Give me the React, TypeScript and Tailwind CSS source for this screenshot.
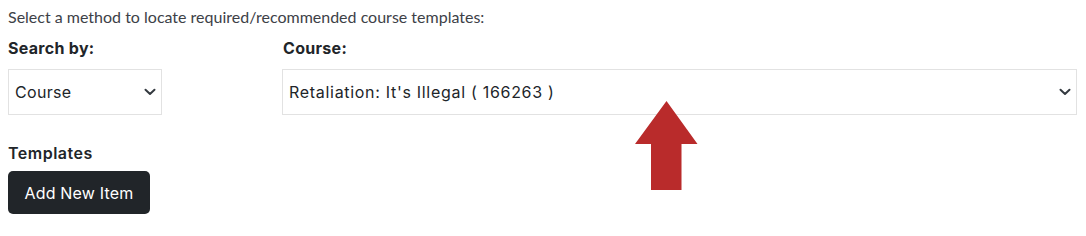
import React from 'react';

const Chevron: React.FC = () => (
  <svg width="12" height="8" viewBox="0 0 12 8" className="pointer-events-none absolute right-[6px] top-1/2 -translate-y-1/2">
    <path d="M1.5 1.8 L6 6 L10.5 1.8" fill="none" stroke="#343a40" strokeWidth="2" strokeLinecap="round" strokeLinejoin="round" />
  </svg>
);

const App: React.FC = () => {
  return (
    <div className="relative h-[236px] w-[1086px] bg-white px-2 text-[16px] text-[#212529] [font-family:Inter,'Noto_Sans',sans-serif]">
      <p className="pt-[5px] leading-6 text-[#3d4147] [font-family:Lato,Inter,sans-serif]">
        Select a method to locate required/recommended course templates:
      </p>
      <div className="mt-[7px] flex gap-[120px]">
        <div className="w-[154px]">
          <label className="block font-bold leading-6 tracking-[0.3px]">Search by:</label>
          <div className="relative mt-[9px]">
            <select className="h-[46px] w-full appearance-none border border-[#e2e2e2] bg-white pl-[6px] text-[16px] tracking-[0.3px] text-[#212529] outline-none">
              <option>Course</option>
            </select>
            <Chevron />
          </div>
        </div>
        <div className="w-[795px]">
          <label className="block pl-px font-bold leading-6 tracking-[0.3px]">Course:</label>
          <div className="relative mt-[9px]">
            <select className="h-[46px] w-full appearance-none border border-[#e2e2e2] bg-white pl-[6px] text-[16px] tracking-[0.7px] text-[#212529] outline-none">
              <option>Retaliation: It's Illegal ( 166263 )</option>
            </select>
            <Chevron />
          </div>
        </div>
      </div>
      <h3 className="mt-[26px] font-semibold leading-6 tracking-[0.5px]">Templates</h3>
      <button className="mt-[6px] h-[43px] w-[142px] rounded-[5px] bg-[#212529] text-[16px] tracking-[0.2px] text-white">
        Add New Item
      </button>
      <svg
        width="64"
        height="90"
        viewBox="0 0 64 90"
        className="absolute left-[634px] top-[101px]"
      >
        <polygon points="32.5,0 63.5,43 47.5,43 47.5,89 17,89 17,43 1,43" fill="#b92b2b" />
      </svg>
    </div>
  );
};

export default App;
